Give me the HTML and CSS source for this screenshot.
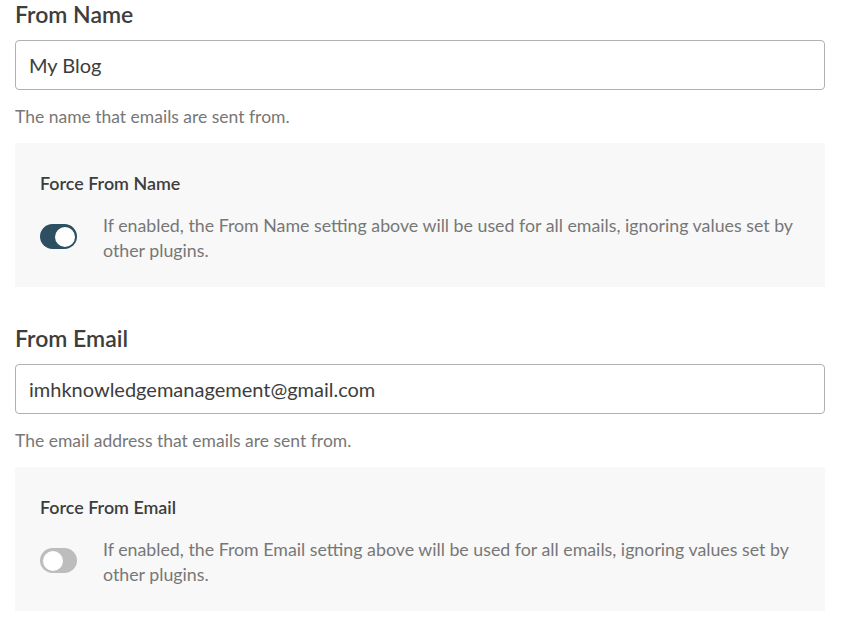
FILE: index.html
```html
<!DOCTYPE html>
<html lang="en">
<head>
<meta charset="utf-8">
<title>Mail settings</title>
<link rel="stylesheet" href="styles.css">
</head>
<body>
<div class="wrap">
  <section class="field">
    <h2 class="field-title">From Name</h2>
    <input class="text-input" type="text" value="My Blog">
    <p class="field-desc">The name that emails are sent from.</p>
    <div class="panel">
      <div class="panel-label">Force From Name</div>
      <div class="toggle-row">
        <span class="toggle on"><span class="knob"></span></span>
        <p class="toggle-desc">If enabled, the From Name setting above will be used for all emails, ignoring values set by other plugins.</p>
      </div>
    </div>
  </section>
  <section class="field second">
    <h2 class="field-title">From Email</h2>
    <input class="text-input" type="text" value="imhknowledgemanagement@gmail.com">
    <p class="field-desc">The email address that emails are sent from.</p>
    <div class="panel">
      <div class="panel-label">Force From Email</div>
      <div class="toggle-row">
        <span class="toggle off"><span class="knob"></span></span>
        <p class="toggle-desc">If enabled, the From Email setting above will be used for all emails, ignoring values set by other plugins.</p>
      </div>
    </div>
  </section>
</div>
</body>
</html>
```
FILE: styles.css
```css
html, body {
  margin: 0;
  padding: 0;
  background: #ffffff;
}
body {
  font-family: "Lato", "Open Sans", sans-serif;
  color: #444444;
}
.wrap {
  width: 810px;
  padding: 0 17px 0 15px;
}
.field-title {
  margin: 0;
  font-size: 23px;
  line-height: 28px;
  font-weight: 600;
  color: #3d3d3d;
}
.second {
  margin-top: 37px;
}
.text-input {
  display: block;
  box-sizing: border-box;
  width: 100%;
  height: 50px;
  margin: 12px 0 0;
  padding: 0 13px;
  border: 1px solid #b1b1b1;
  border-radius: 4px;
  background: #ffffff;
  font-family: "Lato", "Open Sans", sans-serif;
  font-size: 20px;
  color: #3d3d3d;
  outline: none;
}
.field-desc {
  margin: 15px 0 0;
  font-size: 17.5px;
  line-height: 24px;
  color: #777777;
}
.panel {
  margin-top: 14px;
  padding: 28px 25px 24px;
  background: #f8f8f8;
}
.panel-label {
  font-size: 17.9px;
  line-height: 24px;
  font-weight: 600;
  color: #3d3d3d;
}
.toggle-row {
  display: flex;
  align-items: flex-start;
  gap: 26px;
  margin-top: 18px;
}
.toggle {
  flex: none;
  position: relative;
  width: 37px;
  height: 25px;
  margin-top: 11px;
  border-radius: 13px;
}
.toggle.on {
  background: #2c5062;
}
.toggle.off {
  background: #bdbdbd;
}
.knob {
  position: absolute;
  top: 2.5px;
  width: 20px;
  height: 20px;
  border-radius: 50%;
  background: #ffffff;
}
.toggle.on .knob {
  left: 14.5px;
}
.toggle.off .knob {
  left: 2.5px;
}
.toggle-desc {
  margin: 0;
  flex: 1;
  font-size: 17.8px;
  line-height: 25px;
  color: #777777;
}
```
